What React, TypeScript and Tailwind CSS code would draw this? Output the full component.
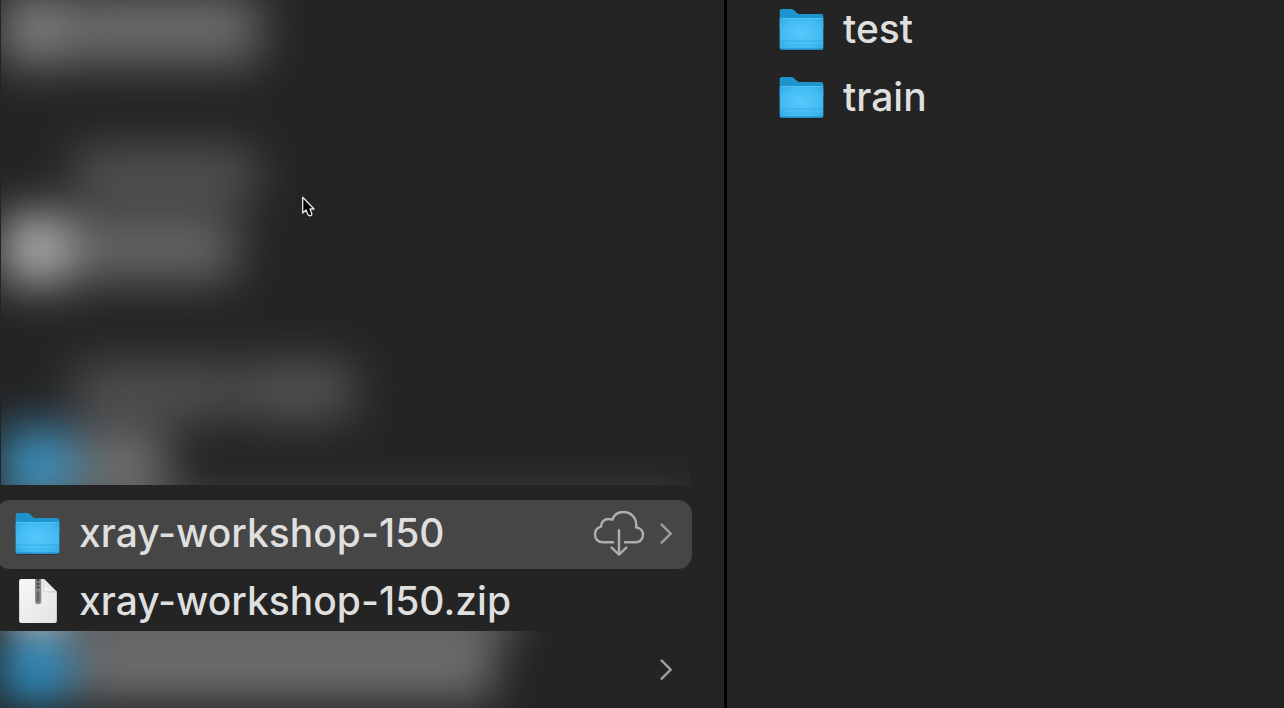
import React from "react";

function FolderIcon({ id }: { id: string }) {
  return (
    <svg viewBox="0 0 135 129" className="h-[43px] w-[45px] shrink-0" aria-hidden="true">
      <defs>
        <radialGradient id={id} cx="0.5" cy="0.5" r="0.75">
          <stop offset="0" stopColor="#56c9fb" />
          <stop offset="0.6" stopColor="#43bbf3" />
          <stop offset="1" stopColor="#2ba3e0" />
        </radialGradient>
      </defs>
      <path d="M5 124 Q3 129 12 128 H124 Q132 128 131 121 Z" fill="#171717" opacity="0.5" />
      <path d="M2 10 Q2 3 9 3 H35 Q41 3 45 7 L53 14 Q57 18 62 18 H126 Q133 18 133 25 V60 H2 Z" fill="#1e94cf" />
      <path d="M2 35 Q2 30 7 30 H128 Q133 30 133 35 V119 Q133 125 127 125 H8 Q2 125 2 119 Z" fill={`url(#${id})`} />
      <path d="M3 31.5 H132" stroke="#5fcaf6" strokeWidth="2" />
      <path d="M3 99 H132" stroke="#2fa3de" strokeWidth="2" />
      <path d="M3 111 H132" stroke="#37a9e2" strokeWidth="1.5" />
      <path d="M4 123 H131" stroke="#1c8cc6" strokeWidth="3" />
    </svg>
  );
}

function ZipIcon() {
  return (
    <svg viewBox="0 0 114 133" className="mx-[3px] h-[44px] w-[38px] shrink-0" aria-hidden="true">
      <defs>
        <linearGradient id="paper" x1="0" y1="0" x2="1" y2="1">
          <stop offset="0" stopColor="#f8f8f8" />
          <stop offset="1" stopColor="#e3e3e3" />
        </linearGradient>
        <linearGradient id="fold" x1="0" y1="1" x2="1" y2="0">
          <stop offset="0" stopColor="#ffffff" />
          <stop offset="1" stopColor="#c9c9c9" />
        </linearGradient>
      </defs>
      <path d="M6 0 H75 L114 39 V127 Q114 133 108 133 H6 Q0 133 0 127 V6 Q0 0 6 0 Z" fill="url(#paper)" />
      <path d="M75 0 L114 39 H80 Q75 39 75 34 Z" fill="url(#fold)" stroke="#bdbdbd" strokeWidth="2" />
      <path d="M48 0 H67 V68 Q67 76 57 76 Q48 76 48 68 Z" fill="#8b8b8b" />
      <path d="M57 0 V32" stroke="#4a4a4a" strokeWidth="9" strokeDasharray="7 4" />
      <path d="M57 40 V66" stroke="#656565" strokeWidth="8" strokeLinecap="round" />
    </svg>
  );
}

function CloudDownloadIcon() {
  return (
    <svg
      viewBox="100 60 156 141"
      className="h-[47px] w-[52px] shrink-0"
      fill="none"
      stroke="#adadad"
      strokeWidth="7.5"
      strokeLinecap="round"
      strokeLinejoin="round"
      aria-hidden="true"
    >
      <path d="M160 157 H130 C115 157 106 147 106 133 C106 121 113 113 124 110 C124 96 134 87 146 87 C151 87 155 88 158 89 C163 75 176 66 191 66 C214 66 230 83 230 106 Q230 109 229 112 C242 114 250 123 250 134 C250 147 241 157 228 157 H196" />
      <path d="M178 121 V193 M156 173 L178 194 L200 173" />
    </svg>
  );
}

function Chevron() {
  return (
    <svg
      viewBox="0 0 36 63"
      className="h-[21px] w-[12px] shrink-0"
      fill="none"
      stroke="#9c9c9c"
      strokeWidth="7.5"
      strokeLinecap="round"
      strokeLinejoin="round"
      aria-hidden="true"
    >
      <path d="M5 5 L32 32 L5 59" />
    </svg>
  );
}

function Pointer() {
  return (
    <svg
      viewBox="0 0 42 63"
      className="pointer-events-none absolute left-[301px] top-[196px] h-[21px] w-[14px]"
      aria-hidden="true"
    >
      <path
        d="M5 4 V51 L15 42 L21 56 Q24 60 29 59 Q34 57 32 52 L27 39 H39 Z"
        fill="#000"
        stroke="#e4e4e4"
        strokeWidth="4"
        strokeLinejoin="round"
      />
    </svg>
  );
}

function HiddenItems() {
  return (
    <div className="ml-px mr-[34px] h-[485px] overflow-hidden" aria-hidden="true">
      <div className="flex flex-col blur-[24px]">
        <div className="flex h-[58px] items-center gap-1 pl-[2px]">
          <div className="h-[68px] w-[64px] bg-[#848484]" />
          <div className="h-[68px] w-[188px] bg-[#6e6e6e]" />
        </div>
        <div className="mt-[87px] flex h-[60px] items-center pl-[74px]">
          <div className="h-[54px] w-[180px] bg-[#555555]" />
        </div>
        <div className="flex h-[88px] items-center gap-1 pl-[2px]">
          <div className="h-[68px] w-[68px] rounded-lg bg-[#b4b4b4]" />
          <div className="h-[62px] w-[160px] bg-[#686868]" />
        </div>
        <div className="mt-[68px] flex h-[60px] items-center gap-2 pl-[74px]">
          <div className="h-[54px] w-[160px] bg-[#535353]" />
          <div className="h-[54px] w-[110px] bg-[#585858]" />
        </div>
        <div className="flex h-[86px] items-center gap-1 pl-[2px]">
          <div className="h-[68px] w-[70px] bg-[#3d98c8]" />
          <div className="h-[64px] w-[90px] bg-[#727272]" />
        </div>
        <div className="-mt-2 h-16 bg-[#505050]" />
      </div>
    </div>
  );
}

function HiddenRow() {
  return (
    <div className="relative flex min-h-[77px] flex-1 items-center justify-end overflow-hidden pr-[52px]">
      <div className="absolute -top-12 left-0 flex flex-col blur-[22px]" aria-hidden="true">
        <div className="flex h-[56px] gap-2 pl-[10px]">
          <div className="h-[46px] w-[58px] bg-[#dddddd]" />
          <div className="h-[56px] w-[440px] bg-[#606060]" />
        </div>
        <div className="flex h-[60px] items-center gap-1 pl-[2px]">
          <div className="h-[62px] w-[68px] bg-[#2f92c8]" />
          <div className="h-[62px] w-[420px] bg-[#6d6d6d]" />
        </div>
      </div>
      <button type="button" aria-label="Open folder" className="flex">
        <Chevron />
      </button>
    </div>
  );
}

export default function App() {
  return (
    <main className="relative grid min-h-screen grid-cols-[724fr_3px_557fr] overflow-hidden bg-[#242424] font-['Inter','Liberation_Sans',sans-serif] text-[39px] font-medium leading-[48px] text-[#dfdfdf]">
      <section className="flex min-w-0 flex-col" aria-label="Files">
        <HiddenItems />
        <button
          type="button"
          aria-current="true"
          className="-ml-1 mr-8 mt-[15px] flex h-[69px] items-center rounded-[14px] bg-[#464646] pb-[3px] pl-[19px] pr-[20px] text-left"
        >
          <FolderIcon id="folder-workshop" />
          <span className="ml-[19px] flex-1 whitespace-nowrap">xray-workshop-150</span>
          <CloudDownloadIcon />
          <span className="ml-[15px] flex">
            <Chevron />
          </span>
        </button>
        <button type="button" className="flex h-[62px] items-center pl-4 pt-[2px] text-left">
          <ZipIcon />
          <span className="ml-[19px] whitespace-nowrap">xray-workshop-150.zip</span>
        </button>
        <HiddenRow />
      </section>
      <div className="bg-black" />
      <section className="-mt-[5px] flex min-w-0 flex-col" aria-label="Folder contents">
        <button type="button" className="flex h-[68px] items-center gap-[19px] pl-[52px] text-left">
          <FolderIcon id="folder-test" />
          <span>test</span>
        </button>
        <button type="button" className="flex h-[68px] items-center gap-[19px] pl-[52px] text-left">
          <FolderIcon id="folder-train" />
          <span>train</span>
        </button>
      </section>
      <Pointer />
    </main>
  );
}
